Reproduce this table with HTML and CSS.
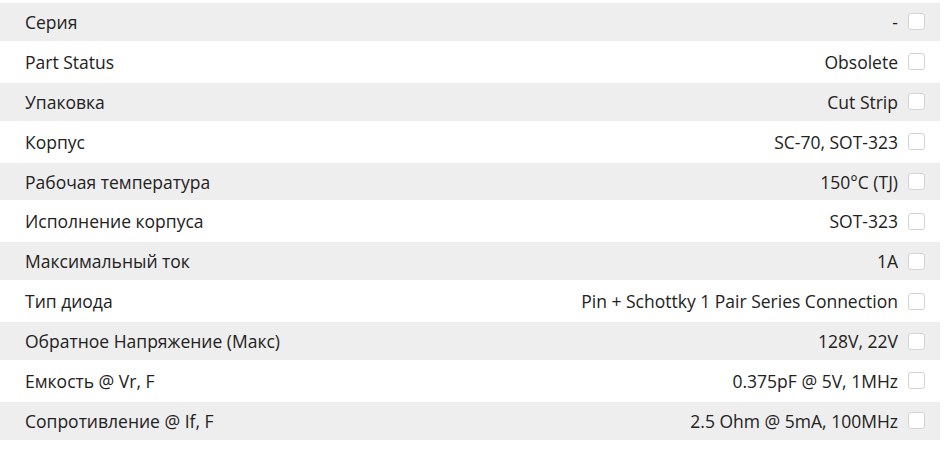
FILE: index.html
```html
<!DOCTYPE html>
<html lang="ru">
<head>
<meta charset="utf-8">
<link rel="stylesheet" href="styles.css">
</head>
<body>
<div class="specs">
  <div class="row"><span class="label">Серия</span><span class="value">-</span><span class="check"></span></div>
  <div class="row"><span class="label">Part Status</span><span class="value">Obsolete</span><span class="check"></span></div>
  <div class="row"><span class="label">Упаковка</span><span class="value">Cut Strip</span><span class="check"></span></div>
  <div class="row"><span class="label">Корпус</span><span class="value">SC-70, SOT-323</span><span class="check"></span></div>
  <div class="row"><span class="label">Рабочая температура</span><span class="value">150°C (TJ)</span><span class="check"></span></div>
  <div class="row"><span class="label">Исполнение корпуса</span><span class="value">SOT-323</span><span class="check"></span></div>
  <div class="row"><span class="label">Максимальный ток</span><span class="value">1A</span><span class="check"></span></div>
  <div class="row"><span class="label">Тип диода</span><span class="value">Pin + Schottky 1 Pair Series Connection</span><span class="check"></span></div>
  <div class="row"><span class="label">Обратное Напряжение (Макс)</span><span class="value">128V, 22V</span><span class="check"></span></div>
  <div class="row"><span class="label">Емкость @ Vr, F</span><span class="value">0.375pF @ 5V, 1MHz</span><span class="check"></span></div>
  <div class="row"><span class="label">Сопротивление @ If, F</span><span class="value">2.5 Ohm @ 5mA, 100MHz</span><span class="check"></span></div>
</div>
</body>
</html>
```

FILE: styles.css
```css
html, body {
  margin: 0;
  padding: 0;
  background: #ffffff;
}

body {
  font-family: "Open Sans", "Noto Sans", sans-serif;
  font-size: 17.5px;
  color: #222222;
}

.specs {
  width: 940px;
  padding-top: 2px;
  display: flex;
  flex-direction: column;
}

.row {
  display: flex;
  align-items: center;
  height: 39.9px;
  box-sizing: border-box;
  border-top: 1px solid #ffffff;
  border-bottom: 1px solid #ffffff;
  padding: 0 15px 0 25px;
}

.row:nth-child(odd) {
  background: #eeeeee;
}

.label {
  flex: 1;
  white-space: nowrap;
}

.value {
  white-space: nowrap;
  margin-right: 10px;
}

.check {
  width: 17px;
  height: 17px;
  box-sizing: border-box;
  border: 1px solid #d4d4d4;
  border-radius: 3px;
  background: #ffffff;
  flex: none;
}
```
